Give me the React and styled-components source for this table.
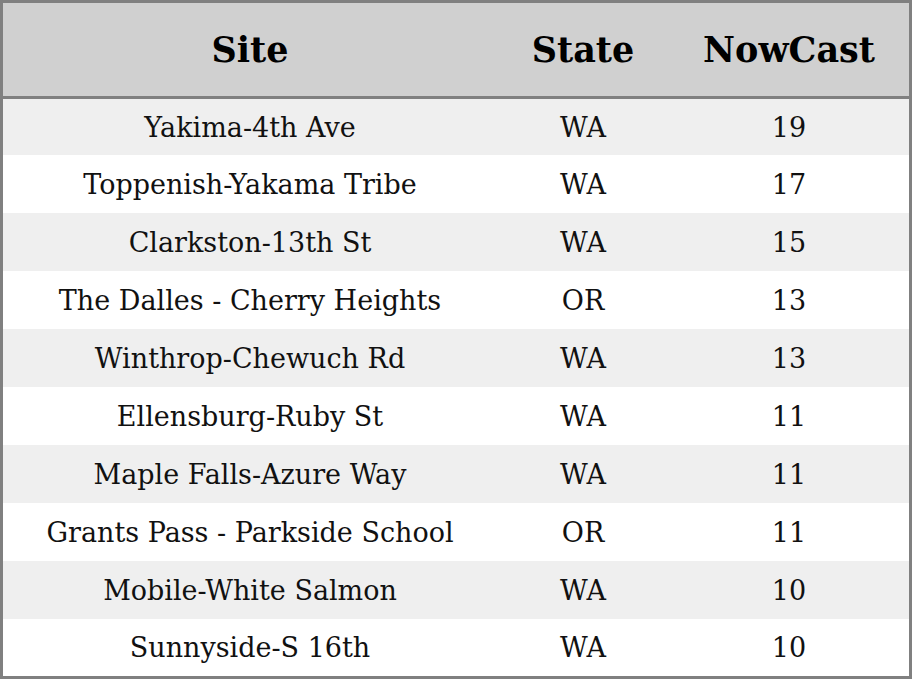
import React from "react";
import styled, { createGlobalStyle } from "styled-components";

const Global = createGlobalStyle`
  html, body { margin: 0; padding: 0; background: #fff; }
  #root { width: 912px; height: 679px; }
`;

const Table = styled.table`
  width: 912px;
  box-sizing: border-box;
  border: 3px solid #808080;
  border-collapse: separate;
  border-spacing: 0;
  table-layout: fixed;
  font-family: "DejaVu Serif", serif;
  color: #111;
`;

const HeadCell = styled.th`
  height: 93px;
  padding: 0;
  background: #d0d0d0;
  border-bottom: 3px solid #808080;
  font-size: 35px;
  font-weight: bold;
  text-align: center;
  color: #000;
`;

const Row = styled.tr`
  background: ${(p) => (p.$odd ? "#efefef" : "#ffffff")};
  height: ${(p) => p.$h}px;
`;

const Cell = styled.td`
  padding: 0;
  text-align: center;
  font-size: 27px;
`;

const rows = [
  ["Yakima-4th Ave", "WA", 19],
  ["Toppenish-Yakama Tribe", "WA", 17],
  ["Clarkston-13th St", "WA", 15],
  ["The Dalles - Cherry Heights", "OR", 13],
  ["Winthrop-Chewuch Rd", "WA", 13],
  ["Ellensburg-Ruby St", "WA", 11],
  ["Maple Falls-Azure Way", "WA", 11],
  ["Grants Pass - Parkside School", "OR", 11],
  ["Mobile-White Salmon", "WA", 10],
  ["Sunnyside-S 16th", "WA", 10],
];

export default function App() {
  return (
    <>
      <Global />
      <Table>
        <colgroup>
          <col style={{ width: 494 }} />
          <col style={{ width: 172 }} />
          <col style={{ width: 240 }} />
        </colgroup>
        <thead>
          <tr>
            <HeadCell>Site</HeadCell>
            <HeadCell>State</HeadCell>
            <HeadCell>NowCast</HeadCell>
          </tr>
        </thead>
        <tbody>
          {rows.map((r, i) => (
            <Row
              key={i}
              $odd={i % 2 === 0}
              $h={i === 0 ? 56 : i === rows.length - 1 ? 57 : 58}
            >
              <Cell>{r[0]}</Cell>
              <Cell>{r[1]}</Cell>
              <Cell>{r[2]}</Cell>
            </Row>
          ))}
        </tbody>
      </Table>
    </>
  );
}
